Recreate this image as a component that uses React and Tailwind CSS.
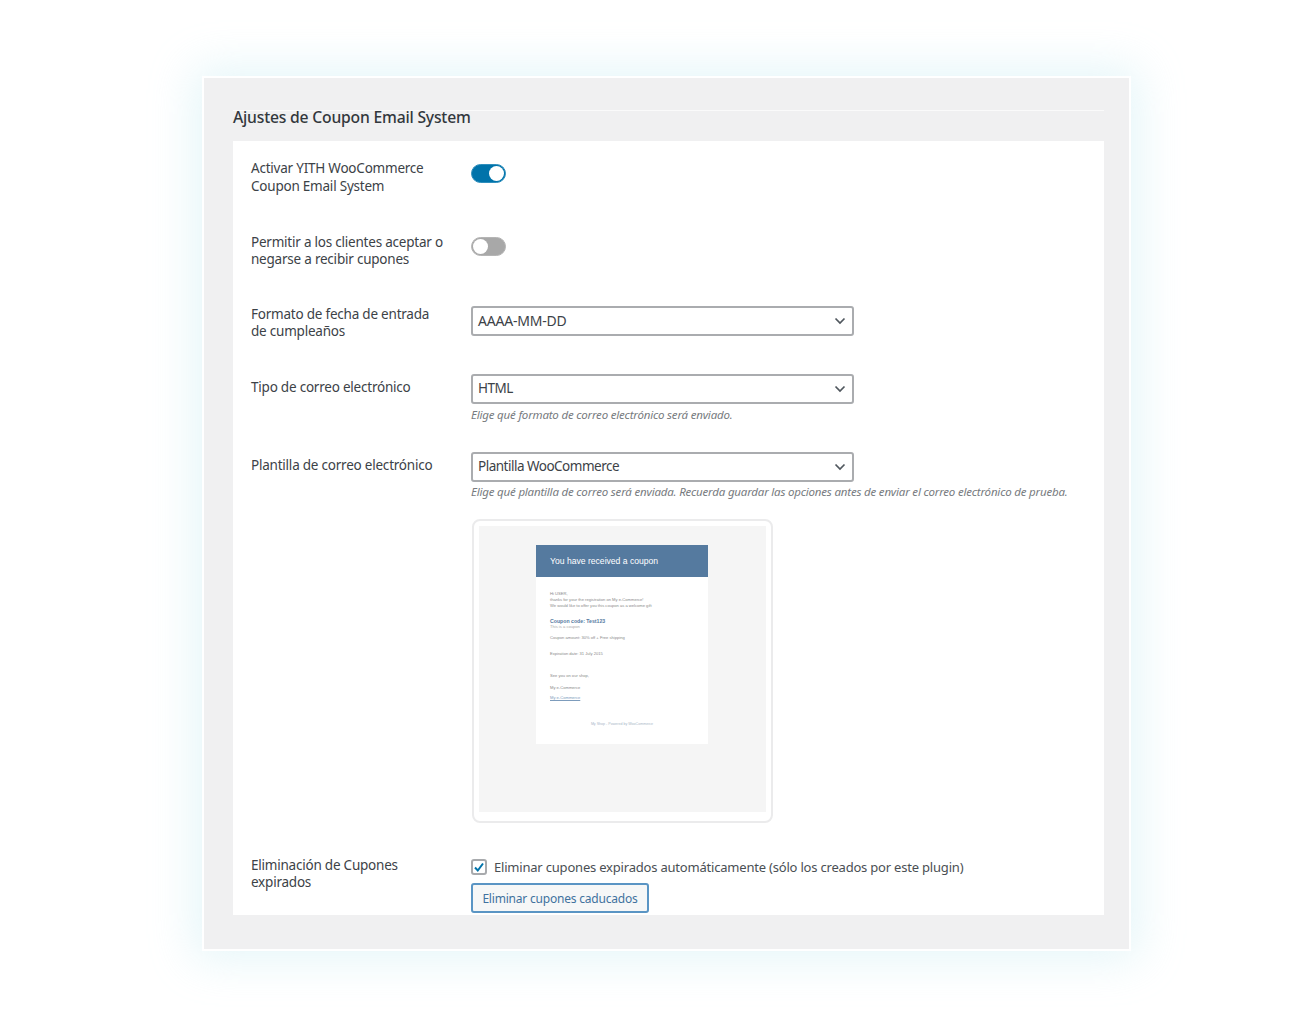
import React from "react";

const font = { fontFamily: '"Noto Sans", "Open Sans", sans-serif' };

function Toggle({ on }) {
  return (
    <div className={"relative h-[19px] w-[35px] rounded-full border " + (on ? "bg-[#0073aa] border-[#2f8fbd]" : "bg-[#a8a8a8] border-[#b5b5b5]")}>
      <div className={"absolute top-[1px] h-[15px] w-[15px] rounded-full bg-white " + (on ? "right-[1px]" : "left-[1px]")} />
    </div>
  );
}

function Select({ value, wide }) {
  return (
    <div className="flex h-[30px] w-[383px] items-center justify-between rounded-[3px] border-[2px] border-[#aaacaf] bg-white pl-[5px] pr-[6px] text-[#3c4247]">
      <span className={wide ? "pb-[2px] text-[14px] tracking-[-0.2px]" : "pb-[2px] text-[13.5px] tracking-[-0.5px]"}>{value}</span>
      <svg width="12" height="8" viewBox="0 0 12 8" fill="none" stroke="#50575e" strokeWidth="1.7">
        <path d="M1.5 1.5 6 6l4.5-4.5" />
      </svg>
    </div>
  );
}

function Label({ children, className = "leading-[17px]" }) {
  return <div className={"w-[220px] shrink-0 pr-[24px] text-[13.5px] tracking-[-0.22px] text-[#3c4247] " + className}>{children}</div>;
}

function Desc({ children, className }) {
  return <p className={"whitespace-nowrap text-[11.5px] italic leading-[16px] tracking-[-0.19px] text-[#777b80] " + className}>{children}</p>;
}

function EmailPreview() {
  return (
    <div className="ml-[57px] mt-[18px] h-[199px] w-[172px] bg-white text-[#555]">
      <div className="flex h-[32px] items-center bg-[#557a9f] pl-[14px] text-[8.6px] text-white" style={{ fontFamily: '"Liberation Sans", sans-serif' }}>
        You have received a coupon
      </div>
      <div className="px-[14px] pt-[14px] text-[4.1px] leading-[6px] text-[#8a8a8a]" style={{ fontFamily: '"Liberation Sans", sans-serif' }}>
        <p>Hi USER,</p>
        <p>thanks for your the registration on My e-Commerce!</p>
        <p>We would like to offer you this coupon as a welcome gift</p>
        <p className="mt-[9px] text-[5.2px] font-bold text-[#557a9f]">Coupon code: Test123</p>
        <p className="text-[#aaa]">This is a coupon</p>
        <p className="mt-[5px]">Coupon amount: 30% off + Free shipping</p>
        <p className="mt-[10px]">Expiration date: 31 July 2015</p>
        <p className="mt-[16px]">See you on our shop,</p>
        <p className="mt-[6px]">My e-Commerce</p>
        <p className="mt-[4px] text-[#7d9cbc] underline">My e-Commerce</p>
        <p className="mt-[20px] text-center text-[3.6px] text-[#a9b8c8]">My Shop - Powered by WooCommerce</p>
      </div>
    </div>
  );
}

export default function App() {
  return (
    <div className="min-h-[1022px] bg-white pt-[76px]" style={font}>
      <div className="ml-[202px] w-[929px] border-[2px] border-white bg-[#f0f0f1] pb-[34px] pl-[29px] pr-[25px] pt-[32px] shadow-[0_0_42px_8px_rgba(175,228,236,0.33)]">
        <div className="border-t border-[#fafafa]">
          <h2 className="text-[15.7px] font-medium leading-[12px] tracking-[-0.2px] text-[#33383d]">Ajustes de Coupon Email System</h2>
        </div>
        <div className="mt-[18px] h-[774px] bg-white pl-[18px] pt-[18px]">
          <div className="flex h-[73px]">
            <Label className="leading-[18px]">Activar YITH WooCommerce Coupon Email System</Label>
            <div className="pt-[5px]"><Toggle on /></div>
          </div>
          <div className="flex h-[72px] pt-[2px]">
            <Label className="leading-[16.5px]">Permitir a los clientes aceptar o negarse a recibir cupones</Label>
            <div className="pt-[3px]"><Toggle /></div>
          </div>
          <div className="flex h-[74px] pt-[2px]">
            <Label>Formato de fecha de entrada de cumpleaños</Label>
            <div><Select value="AAAA-MM-DD" wide /></div>
          </div>
          <div className="flex h-[77px] pt-[1px]">
            <Label>Tipo de correo electrónico</Label>
            <div className="-mt-[5px]">
              <Select value="HTML" />
              <Desc className="mt-[3px]">Elige qué formato de correo electrónico será enviado.</Desc>
            </div>
          </div>
          <div className="flex h-[402px] pt-[2px]">
            <Label>Plantilla de correo electrónico</Label>
            <div className="-mt-[5px]">
              <Select value="Plantilla WooCommerce" />
              <Desc className="mt-[2px]">Elige qué plantilla de correo será enviada. Recuerda guardar las opciones antes de enviar el correo electrónico de prueba.</Desc>
              <div className="ml-[1px] mt-[19px] h-[304px] w-[301px] rounded-[8px] border-[2px] border-[#ebebec] bg-white p-[5px]">
                <div className="h-[286px] w-[287px] overflow-hidden bg-[#f5f5f5] pt-px">
                  <EmailPreview />
                </div>
              </div>
            </div>
          </div>
          <div className="flex">
            <Label>Eliminación de Cupones expirados</Label>
            <div>
              <div className="flex items-center gap-[7px] pt-[1px] text-[13px] leading-[18px] tracking-[-0.2px] text-[#4a4f54]">
                <div className="flex h-[16px] w-[16px] items-center justify-center rounded-[3px] border-[2px] border-[#a8aaad] bg-white">
                  <svg width="12" height="12" viewBox="0 0 12 12" fill="none" stroke="#0073aa" strokeWidth="2" className="shrink-0">
                    <path d="M2 6.5 4.8 9.5 10 2.5" />
                  </svg>
                </div>
                <span>Eliminar cupones expirados automáticamente (sólo los creados por este plugin)</span>
              </div>
              <button className="mt-[7px] h-[30px] w-[178px] rounded-[3px] border-[2px] border-[#5a95c4] bg-[#f6f7f7] pt-[2px] text-[12px] tracking-[-0.2px] text-[#41729e]">
                Eliminar cupones caducados
              </button>
            </div>
          </div>
        </div>
      </div>
    </div>
  );
}
